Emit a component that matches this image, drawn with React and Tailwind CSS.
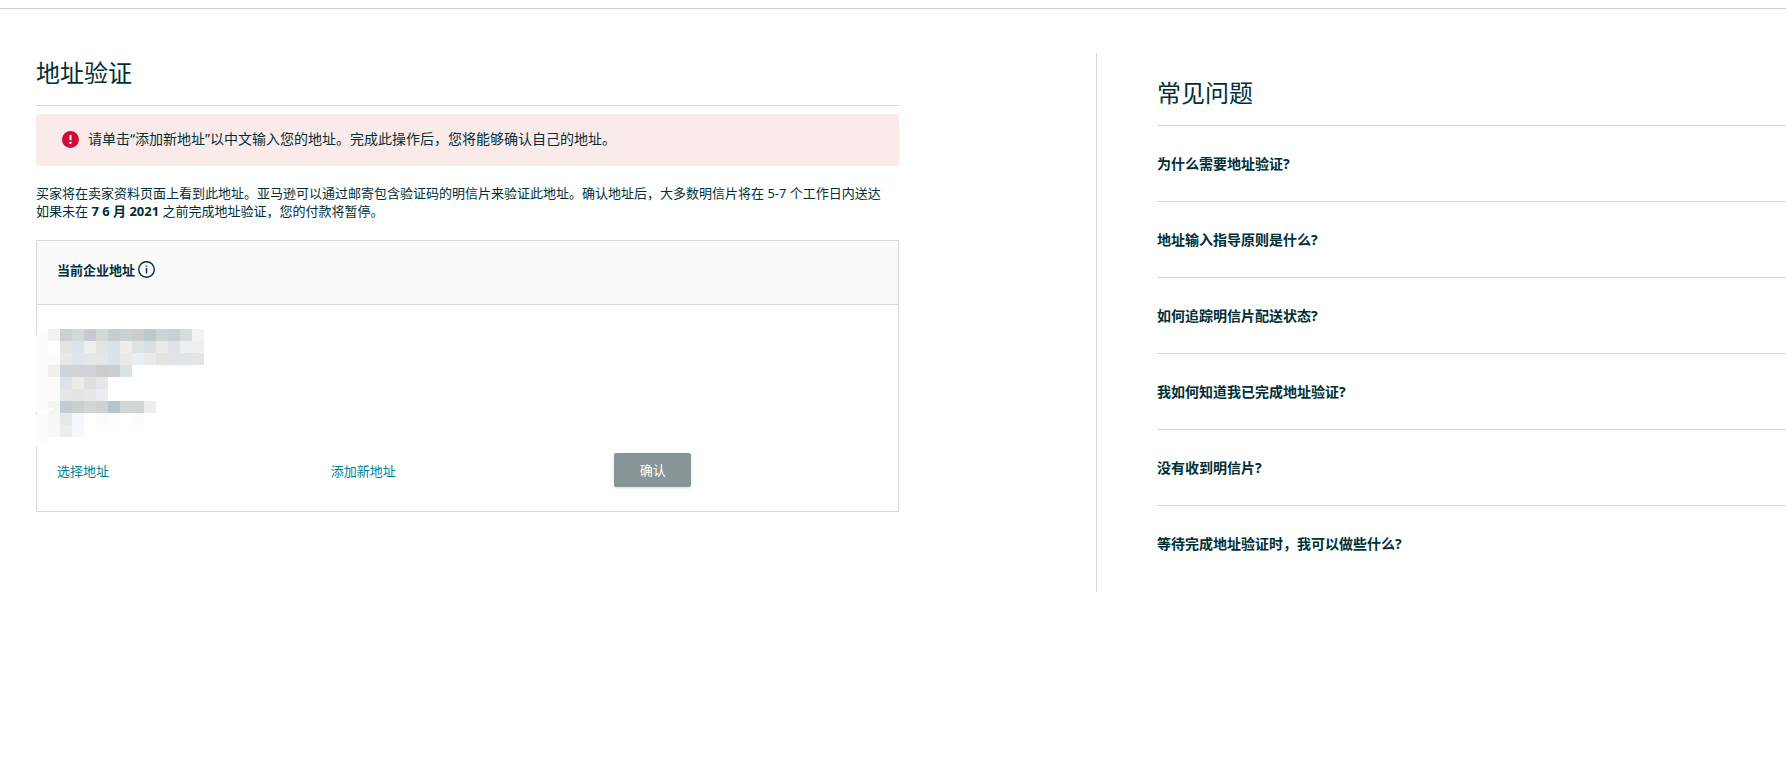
import React from "react";

const questions = [
  "为什么需要地址验证?",
  "地址输入指导原则是什么?",
  "如何追踪明信片配送状态?",
  "我如何知道我已完成地址验证?",
  "没有收到明信片?",
  "等待完成地址验证时，我可以做些什么?",
];

// one string per row, 12px cells, "-" is an empty cell
const mosaic = [
  "f4f2f0 cad0d2 d4dad8 c9c9d3 d4d8d5 c8cccf c9d1d4 cdcdcf bccacd cdd2d4 c8d1d1 d6dcda f3f3f4",
  "ffffff e3e5e2 dbe4e6 ecf0f1 e2e4e2 dae3e7 eeedeb dee4e4 d9e0e4 e9ebe9 dfe3e7 ecf0f1 efeff0",
  "fcfcfa e7e8e7 dde6ea e2e8e8 e7e6e7 dae3e7 eae9e7 eaeff3 e7ebec e3e4e1 e0e4e6 dfe4e8 e0e5e8",
  "f0f0ee d0d4d9 d1d3d6 d0d4d9 c9cccc c9cdcc dae3e6",
  "fdfaf8 dee3e9 ebecea dde0e1 e4e7eb",
  "fcfcfc e4e8e7 e2e6e5 e5e8e9 eaeef2",
  "f4f4f2 c3ccd3 c9d2d0 d2d6d9 cfd2d3 b9c5cc d1d6d8 d1d7d7 eeeef0",
  "f7f7f7 e6eae7 f7f6fc - fbfdfc fdfdfe - fcfdfb fdfffe",
  "f8f8f8 eaedea f7f8fd",
];

const HiddenAddress = () => (
  <svg
    className="absolute -left-px top-6 h-[118px] w-[168px]"
    viewBox="0 0 168 118"
    shapeRendering="crispEdges"
    aria-hidden="true"
  >
    <path d="M0 6l12 -2v111l-12 3z" fill="#fbfdfc" />
    {mosaic.map((row, y) =>
      row.split(" ").map((color, x) =>
        color === "-" ? null : (
          <rect
            key={`${x}-${y}`}
            x={12 + x * 12}
            y={y * 12}
            width="12"
            height="12"
            fill={`#${color}`}
          />
        )
      )
    )}
    {/* bit of the card border left between two strokes */}
    <path d="M0 83h1v3h-1z" fill="#d5dbdb" />
    <path d="M1 85l17 -6" stroke="#fefefe" strokeWidth="2" shapeRendering="auto" />
  </svg>
);

const AlertIcon = () => (
  <svg className="size-[17px] shrink-0" viewBox="0 0 17 17" aria-hidden="true">
    <circle cx="8.5" cy="8.5" r="8.5" fill="#cc0c39" />
    <path d="M7.5 4h2v5.2h-2z" fill="#fff" />
    <path d="M7.5 10.8h2v2h-2z" fill="#fff" />
  </svg>
);

const InfoIcon = () => (
  <svg className="size-[17px] shrink-0" viewBox="0 0 17 17" aria-hidden="true">
    <circle cx="8.5" cy="8.5" r="7.8" fill="none" stroke="#002f36" strokeWidth="1.4" />
    <path d="M7.8 7h1.4v5.5H7.8zM7.8 4.4h1.4v1.4H7.8z" fill="#002f36" />
  </svg>
);

const AddressCard = () => (
  <section className="mt-5 border border-[#d5dbdb]">
    <header className="flex h-16 items-center gap-[3px] border-b border-[#d5dbdb] bg-[#fafafa] px-5 pb-1.5">
      <h2 className="text-[13px] leading-5 font-bold">当前企业地址</h2>
      <button type="button" aria-label="当前企业地址说明">
        <InfoIcon />
      </button>
    </header>

    <div className="relative px-5 pt-[148px] pb-6">
      <HiddenAddress />
      <div className="grid grid-cols-3 items-start text-[13px]">
        <a href="#select" className="mt-2 justify-self-start leading-5 text-[#008296]">
          选择地址
        </a>
        <a href="#add" className="mt-2 justify-self-start leading-5 text-[#008296]">
          添加新地址
        </a>
        <button
          type="button"
          className="ml-2.5 h-[34px] w-[77px] justify-self-start rounded-xs bg-[#879596] leading-5 text-white shadow-sm"
        >
          确认
        </button>
      </div>
    </div>
  </section>
);

const App = () => {
  return (
    <div className="min-h-screen bg-[#fefefe] pt-2 font-['Noto_Sans','Noto_Sans_CJK_SC',sans-serif] text-[#002f36]">
      <div className="border-t border-[#cccccc] pt-11">
        <div className="grid grid-cols-[1096fr_690fr] items-start">
          <main className="pr-[197px] pl-9">
            <h1 className="border-b border-[#d5dbdb] pt-1 pb-4 text-2xl leading-8">
              地址验证
            </h1>

            <div
              role="alert"
              className="mt-2 flex h-[52px] items-center gap-[9px] rounded-xs bg-[#faeaea] px-[26px] pb-0.5 text-sm leading-5"
            >
              <AlertIcon />
              <p>请单击“添加新地址”以中文输入您的地址。完成此操作后，您将能够确认自己的地址。</p>
            </div>

            <p className="mt-[18px] text-[13px] leading-[18px]">
              买家将在卖家资料页面上看到此地址。亚马逊可以通过邮寄包含验证码的明信片来验证此地址。确认地址后，大多数明信片将在 5-7 个工作日内送达
              <br />
              如果未在 <strong>7 6 月 2021</strong> 之前完成地址验证，您的付款将暂停。
            </p>

            <AddressCard />
          </main>

          <aside className="border-l border-[#d9d9d9] pb-[11px] pl-[60px]">
            <h2 className="pt-6 pb-4 text-2xl leading-8">常见问题</h2>
            <ul>
              {questions.map((question) => (
                <li key={question} className="border-t border-[#d9d9d9]">
                  <button
                    type="button"
                    className="h-[75px] w-full text-left text-sm leading-5 font-bold"
                  >
                    {question}
                  </button>
                </li>
              ))}
            </ul>
          </aside>
        </div>
      </div>
    </div>
  );
};

export default App;
